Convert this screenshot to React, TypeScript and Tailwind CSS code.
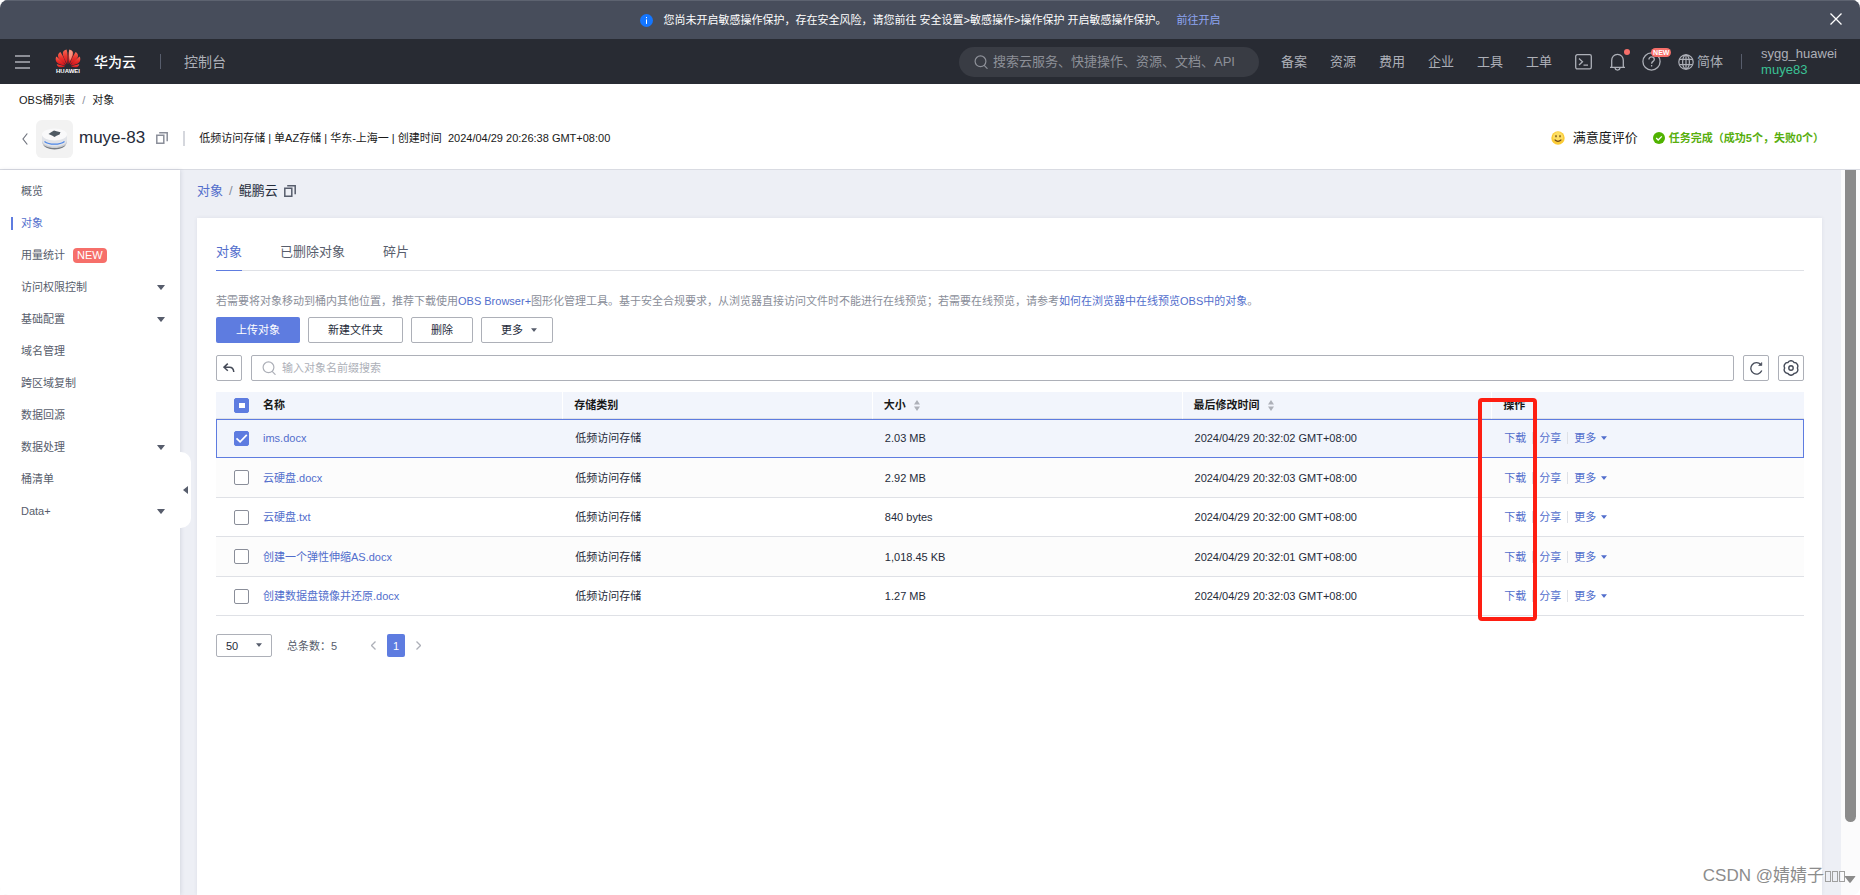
import { useState } from 'react';
import type { ReactNode } from 'react';

interface ObjectRow {
  name: string;
  storage: string;
  size: string;
  modified: string;
}

interface MenuEntry {
  label: string;
  isNew?: boolean;
  expandable?: boolean;
}

const MENU: MenuEntry[] = [
  { label: '概览' },
  { label: '对象' },
  { label: '用量统计', isNew: true },
  { label: '访问权限控制', expandable: true },
  { label: '基础配置', expandable: true },
  { label: '域名管理' },
  { label: '跨区域复制' },
  { label: '数据回源' },
  { label: '数据处理', expandable: true },
  { label: '桶清单' },
  { label: 'Data+', expandable: true },
];

const ROWS: ObjectRow[] = [
  { name: 'ims.docx', storage: '低频访问存储', size: '2.03 MB', modified: '2024/04/29 20:32:02 GMT+08:00' },
  { name: '云硬盘.docx', storage: '低频访问存储', size: '2.92 MB', modified: '2024/04/29 20:32:03 GMT+08:00' },
  { name: '云硬盘.txt', storage: '低频访问存储', size: '840 bytes', modified: '2024/04/29 20:32:00 GMT+08:00' },
  { name: '创建一个弹性伸缩AS.docx', storage: '低频访问存储', size: '1,018.45 KB', modified: '2024/04/29 20:32:01 GMT+08:00' },
  { name: '创建数据盘镜像并还原.docx', storage: '低频访问存储', size: '1.27 MB', modified: '2024/04/29 20:32:03 GMT+08:00' },
];

const NAV = ['备案', '资源', '费用', '企业', '工具', '工单'];
const TABS = ['对象', '已删除对象', '碎片'];

function Caret({ className = '' }: { className?: string }) {
  return (
    <svg className={`shrink-0 ${className}`} viewBox="0 0 8 5" fill="currentColor">
      <path d="M0.6 0h6.8q.8 0 .3.6L4.5 4.6q-.5.6-1 0L.3.6Q-.2 0 .6 0z" />
    </svg>
  );
}

function CopyIcon({ className = '' }: { className?: string }) {
  return (
    <svg className={`w-3 h-3 shrink-0 ${className}`} viewBox="0 0 12 12" fill="none" stroke="currentColor" strokeWidth={1.5}>
      <path d="M0.8 3.3h7v7.9h-7z" />
      <path d="M3.2 0.8h8v8.4" />
    </svg>
  );
}

function SearchIcon({ className = '' }: { className?: string }) {
  return (
    <svg className={`shrink-0 ${className}`} viewBox="0 0 14 14" fill="none" stroke="currentColor" strokeWidth={1.2}>
      <circle cx="6.5" cy="6.3" r="5.4" />
      <path d="M10.2 10.4l2.9 3" strokeLinecap="round" />
    </svg>
  );
}

function SortIcon() {
  return (
    <svg className="w-[6px] h-[11px] ml-2" viewBox="0 0 6 11" fill="#adb0b8">
      <path d="M3 0l3 4.5H0zM3 11L0 6.5h6z" />
    </svg>
  );
}

function HuaweiLogo() {
  const petals = [
    'M11.9 17.6C9.6 13 7.2 8.4 7.4 4.6 7.5 2.4 9.2 1 11.2.6c1.200 4 1.300 11 .7 17z',
    'M10.9 18.200C7 15.400 2.800 11.600 2.600 8c-.1-1.800.8-3.600 2.400-4.600 2.200 4 4.900 9.800 5.900 14.800z',
    'M10.2 19C6.200 18.800 2 17.400.8 14.600 0 12.600.1 10.400 1 8.800c2.800 2.800 7 6.600 9.200 10.200z',
    'M9.800 19.700C7.800 21.200 5.600 21.600 4 21 2.400 20.400 1.600 19.200 1.400 17.600c2.400 1 6 1.700 8.400 2.100z',
  ];
  return (
    <div className="flex flex-col items-center w-[26px]">
      <svg className="w-[26px] h-[19px]" viewBox="0 0 26 22" preserveAspectRatio="none">
        <defs>
          <linearGradient id="petal" x1="0" y1="0" x2="0" y2="1">
            <stop offset="0" stopColor="#f56a55" />
            <stop offset="0.5" stopColor="#ea2f2a" />
            <stop offset="1" stopColor="#d0121c" />
          </linearGradient>
        </defs>
        <g fill="url(#petal)">
          {petals.map((d) => (
            <path key={d} d={d} transform="translate(0.4 0)" />
          ))}
          {petals.map((d) => (
            <path key={d} d={d} transform="matrix(-1 0 0 1 25.6 0)" />
          ))}
        </g>
        <path d="M14.2 1c2 .4 3.300 1.500 3.400 3.600.1 2.400-1.200 6-2.800 9.400-.9-4-1-9-.6-13z" fill="#fbb6a0" opacity="0.7" />
      </svg>
      <span className="text-[6px] leading-[7px] font-bold text-white">HUAWEI</span>
    </div>
  );
}

function BucketIcon() {
  return (
    <div className="flex items-center justify-center w-[37px] h-[38px] rounded-md bg-[#f2f2f2] shrink-0">
      <svg className="w-[27px] h-[24px]" viewBox="0 0 27 24">
        <ellipse cx="13.5" cy="16.5" rx="11.5" ry="6" fill="#777c83" />
        <path d="M1 8v7c0 3.600 5.600 6 12.500 6S26 18.600 26 15V8z" fill="#c9ccd1" />
        <path d="M1 8v5.500c0 3.600 5.600 6 12.500 6s12.500-2.400 12.500-6V8z" fill="#e1e3e8" />
        <path d="M3.500 14.500c2.400 1.800 6 2.700 10 2.700s7.600-.9 10-2.700" fill="none" stroke="#4b86e8" strokeWidth="1.2" />
        <ellipse cx="13.5" cy="7.500" rx="12.500" ry="6" fill="#f9f9fa" />
        <path d="M7.500 7l3-2L13 3.500l2.500.8 4 1-1 2.200-3 1.300-2 1.200-2.500-1.400z" fill="#505b64" />
      </svg>
    </div>
  );
}

function IconButton({ label, children }: { label: string; children: ReactNode }) {
  return (
    <button
      aria-label={label}
      className="flex items-center justify-center w-[26px] h-[26px] shrink-0 border border-[#adb0b8] rounded-xs bg-white text-[#464c59]"
    >
      {children}
    </button>
  );
}

function ToolButton({ children }: { children: ReactNode }) {
  return (
    <button className="flex items-center h-[26px] px-[19px] border border-[#adb0b8] rounded-xs bg-white text-[#252b3a]">
      {children}
    </button>
  );
}

function NoticeBar({ onClose }: { onClose: () => void }) {
  return (
    <div className="relative flex items-center justify-center h-[39px] shrink-0 bg-[#474d5b] border-t border-[#5d6370] text-white">
      <svg className="w-[13px] h-[13px] mr-[11px]" viewBox="0 0 13 13">
        <circle cx="6.5" cy="6.5" r="6.5" fill="#1476ff" />
        <path d="M6.5 5.4v4.500M6.500 3v1.200" stroke="#fff" strokeWidth="1" />
      </svg>
      <span>您尚未开启敏感操作保护，存在安全风险，请您前往 安全设置&gt;敏感操作&gt;操作保护 开启敏感操作保护。</span>
      <a href="#" className="ml-[10px] text-[#8ea5f2]">
        前往开启
      </a>
      <button aria-label="关闭" onClick={onClose} className="absolute right-[18px] top-3">
        <svg className="w-3 h-3" viewBox="0 0 12 12" stroke="#fff" strokeWidth={1.3}>
          <path d="M0.5 0.5l11 11M11.5 0.5l-11 11" />
        </svg>
      </button>
    </div>
  );
}

function TopBar() {
  return (
    <header className="flex items-center h-[45px] shrink-0 pl-[15px] pr-[23px] bg-[#282b33] text-[#adb0b8] text-[13px]">
      <button aria-label="菜单">
        <svg className="w-[15px] h-[14px]" viewBox="0 0 15 14" stroke="currentColor" strokeWidth={1.4}>
          <path d="M0 1h15M0 7h15M0 13h15" />
        </svg>
      </button>
      <div className="ml-[25px]">
        <HuaweiLogo />
      </div>
      <span className="ml-[13px] text-sm font-medium text-white">华为云</span>
      <span className="w-px h-[15px] ml-6 bg-[#575d6c]" />
      <span className="ml-[23px] text-sm">控制台</span>

      <label className="flex items-center w-[300px] h-[30px] ml-auto pl-[15px] rounded-full bg-[#393c44] text-[#8d9098]">
        <SearchIcon className="w-[14px] h-[14px]" />
        <input
          aria-label="搜索"
          placeholder="搜索云服务、快捷操作、资源、文档、API"
          className="flex-1 min-w-0 ml-[5px] bg-transparent outline-none placeholder:text-[#8d9098]"
        />
      </label>
      <nav className="flex gap-[23px] ml-[22px]">
        {NAV.map((item) => (
          <a key={item} href="#">
            {item}
          </a>
        ))}
      </nav>
      <button aria-label="CloudShell" className="ml-[23px]">
        <svg className="w-[17px] h-[16px]" viewBox="0 0 17 16" fill="none" stroke="currentColor" strokeWidth={1.3}>
          <rect x="0.7" y="0.7" width="15.6" height="14.2" rx="1.6" />
          <path d="M4 4.5l3.500 3.300L4 11M8.500 11.200H13" />
        </svg>
      </button>
      <button aria-label="消息" className="relative ml-[17px]">
        <svg className="w-[17px] h-[18px]" viewBox="0 0 17 18" fill="none" stroke="currentColor" strokeWidth={1.3}>
          <path d="M1 14.300h15M2.700 14V7.500C2.700 4 5 1.300 8.500 1.300S14.300 4 14.300 7.500V14" />
          <path d="M6 15c.3 1.500 1.200 2.200 2.500 2.200S10.700 16.500 11 15" />
        </svg>
        <span className="absolute -right-1 -top-1 w-[6px] h-[6px] rounded-full bg-[#f66f6a]" />
      </button>
      <button aria-label="帮助" className="relative ml-[16px]">
        <svg className="w-[19px] h-[19px]" viewBox="0 0 19 19" fill="none" stroke="currentColor" strokeWidth={1.3}>
          <circle cx="9.5" cy="9.5" r="8.6" />
          <path d="M6.900 7.600c0-1.700 1.100-2.700 2.700-2.700s2.700 1 2.700 2.500c0 2-2.700 2-2.700 4.300M9.600 13v1.600" />
        </svg>
        <span className="absolute left-[9px] -top-1 px-[2px] rounded-full bg-[#f66f6a] text-white text-[7px] leading-[9px] font-bold">
          NEW
        </span>
      </button>
      <button className="flex items-center ml-[17px]">
        <svg className="w-4 h-4 mr-[3px]" viewBox="0 0 16 16" fill="none" stroke="currentColor" strokeWidth={1.2}>
          <circle cx="8" cy="8" r="7.2" />
          <ellipse cx="8" cy="8" rx="3.4" ry="7.2" />
          <path d="M8 0.8v14.400M1.500 5.300h13M1.500 10.700h13" />
        </svg>
        简体
      </button>
      <span className="w-px h-[15px] ml-[18px] bg-[#575d6c]" />
      <div className="ml-[19px] leading-4">
        <div>sygg_huawei</div>
        <div className="text-[#3ac295]">muye83</div>
      </div>
    </header>
  );
}

function BucketHeader() {
  return (
    <section className="h-[86px] shrink-0 border-b border-[#d9dbe2] bg-white text-[#191919]">
      <div className="flex gap-[7px] pl-[19px] pt-2 leading-4">
        <a href="#">OBS桶列表</a>
        <span className="text-[#8a8e99]">/</span>
        <span>对象</span>
      </div>
      <div className="flex items-center h-[38px] mt-3 pl-[22px] pr-9">
        <button aria-label="返回" className="text-[#71757f]">
          <svg className="w-[6px] h-3" viewBox="0 0 6 12" fill="none" stroke="currentColor" strokeWidth={1.2}>
            <path d="M5.3 0.5L1 6l4.300 5.500" />
          </svg>
        </button>
        <div className="ml-2">
          <BucketIcon />
        </div>
        <div className="flex flex-1 items-center ml-[6px] pb-[2px]">
          <h1 className="text-[17px] text-[#252b3a]">muye-83</h1>
          <CopyIcon className="ml-[11px] text-[#8a8e99]" />
          <span className="w-[2px] h-[15px] ml-[15px] bg-[#d5d7dd]" />
          <span className="ml-[14px] whitespace-pre">
            低频访问存储 | 单AZ存储 | 华东-上海一 | 创建时间{'  '}2024/04/29 20:26:38 GMT+08:00
          </span>

          <svg className="w-[14px] h-[14px] ml-auto" viewBox="0 0 14 14">
            <circle cx="7" cy="7" r="6.7" fill="#fbcb35" />
            <circle cx="7" cy="6" r="5" fill="#fdde62" />
            <path d="M3.6 8.600q3.400 3.400 6.800 0" fill="none" stroke="#6b4412" strokeWidth="1.2" />
            <path d="M5 4.300v2M9 4.300v2" stroke="#6b4412" strokeWidth="1.3" />
          </svg>
          <a href="#" className="ml-2 text-[13px]">
            满意度评价
          </a>
          <svg className="w-3 h-3 ml-[15px]" viewBox="0 0 12 12">
            <circle cx="6" cy="6" r="6" fill="#50b300" />
            <path d="M3.2 6l2 2 3.600-3.600" stroke="#fff" strokeWidth="1.3" fill="none" />
          </svg>
          <span className="ml-1 font-bold text-[#57ae0d]">任务完成（成功5个，失败0个）</span>
        </div>
      </div>
    </section>
  );
}

function Sidebar({ active, onSelect }: { active: string; onSelect: (label: string) => void }) {
  return (
    <aside className="relative z-10 w-[180px] shrink-0 pt-[5px] bg-white shadow-[1px_0_4px_rgba(40,50,80,0.12)]">
      <ul>
        {MENU.map((entry) => (
          <li key={entry.label}>
            <button
              onClick={() => onSelect(entry.label)}
              className={`flex items-center w-full h-8 pl-[11px] pr-[15px] text-left ${
                entry.label === active ? 'text-[#526ecc]' : 'text-[#575d6c]'
              }`}
            >
              <span className={`w-[2px] h-[13px] mr-2 ${entry.label === active ? 'bg-[#5e7ce0]' : ''}`} />
              {entry.label}
              {entry.isNew && (
                <span className="ml-2 px-1 rounded-sm bg-[#f66f6a] text-white leading-[15px]">NEW</span>
              )}
              {entry.expandable && <Caret className="w-2 h-[5px] ml-auto text-[#575d6c]" />}
            </button>
          </li>
        ))}
      </ul>
      <button
        aria-label="收起"
        className="absolute left-full top-[282px] flex items-center justify-center w-[11px] h-[76px] rounded-r-[10px] bg-white text-[#575d6c]"
      >
        <svg className="w-[5px] h-2" viewBox="0 0 5 8" fill="currentColor">
          <path d="M5 0v8L0 4z" />
        </svg>
      </button>
    </aside>
  );
}

interface RowCheckboxProps {
  label: string;
  checked: boolean;
  mixed?: boolean;
  onChange: () => void;
}

function RowCheckbox({ label, checked, mixed, onChange }: RowCheckboxProps) {
  return (
    <span className="relative block w-[15px] h-[15px]">
      <input
        type="checkbox"
        aria-label={label}
        checked={checked}
        onChange={onChange}
        className="block appearance-none w-[15px] h-[15px] rounded-xs border border-[#8a8e99] bg-white checked:border-[#5e7ce0] checked:bg-[#5e7ce0]"
      />
      {checked && (
        <svg className="absolute inset-0 w-[15px] h-[15px] pointer-events-none" viewBox="0 0 15 15" fill="none">
          {mixed ? (
            <path d="M5 5h6v5H5z" fill="#fff" />
          ) : (
            <path d="M2.5 7.3l3.600 3.600 6.700-7" stroke="#fff" strokeWidth="1.7" />
          )}
        </svg>
      )}
    </span>
  );
}

function ObjectTable() {
  const [selected, setSelected] = useState<string[]>(['ims.docx']);

  const toggle = (name: string) => {
    setSelected((prev) => (prev.includes(name) ? prev.filter((n) => n !== name) : [...prev, name]));
  };

  const toggleAll = () => {
    setSelected(selected.length > 0 ? [] : ROWS.map((r) => r.name));
  };

  return (
    <div className="relative mt-[11px]">
      <table className="w-full table-fixed border-separate border-spacing-0 text-left text-[#252b3a]">
        <colgroup>
          <col className="w-[47px]" />
          <col />
          <col className="w-[19.5%]" />
          <col className="w-[19.5%]" />
          <col className="w-[19.5%]" />
          <col className="w-[19.7%]" />
        </colgroup>
        <thead>
          <tr className="h-[27px] bg-[#f2f5fc] text-[#191919] [&>th]:border-b [&>th]:border-b-[#dfe1e6]">
            <th className="pl-[18px]">
              <RowCheckbox
                label="全选"
                checked={selected.length > 0}
                mixed={selected.length < ROWS.length}
                onChange={toggleAll}
              />
            </th>
            <th>名称</th>
            <th className="pl-[11px] border-l border-l-white">存储类别</th>
            <th className="pl-[11px] border-l border-l-white">
              <span className="flex items-center">
                大小
                <SortIcon />
              </span>
            </th>
            <th className="pl-[11px] border-l border-l-white">
              <span className="flex items-center">
                最后修改时间
                <SortIcon />
              </span>
            </th>
            <th className="pl-[11px] border-l border-l-white">操作</th>
          </tr>
        </thead>
        <tbody>
          {ROWS.map((row) => {
            const isSelected = selected.includes(row.name);
            return (
              <tr
                key={row.name}
                className={`h-[39px] even:h-10 [&>td]:border-b [&>td]:border-[#dfe1e6] ${
                  isSelected ? 'bg-[#f2f5fc] outline -outline-offset-1 outline-[#5e7ce0]' : 'even:bg-[#fcfcfc]'
                }`}
              >
                <td className="pl-[18px]">
                  <RowCheckbox label={row.name} checked={isSelected} onChange={() => toggle(row.name)} />
                </td>
                <td>
                  <a href="#" className="text-[#526ecc]">
                    {row.name}
                  </a>
                </td>
                <td className="pl-[13px]">{row.storage}</td>
                <td className="pl-[13px]">{row.size}</td>
                <td className="pl-[13px]">{row.modified}</td>
                <td className="pl-[13px] text-[#526ecc]">
                  <div className="flex items-center">
                    <a href="#">下载</a>
                    <span className="w-px h-3 mx-[6px] bg-[#dfe1e6]" />
                    <a href="#">分享</a>
                    <span className="w-px h-3 mx-[6px] bg-[#dfe1e6]" />
                    <button className="flex items-center">
                      更多
                      <Caret className="w-[6px] h-1 ml-[5px]" />
                    </button>
                  </div>
                </td>
              </tr>
            );
          })}
        </tbody>
      </table>

      {/* download column highlight */}
      <div className="absolute top-[6px] -bottom-[5px] right-[267px] w-[59px] border-4 border-[#fe1e12] rounded-sm pointer-events-none" />
    </div>
  );
}

function Pagination() {
  return (
    <div className="flex items-center mt-[18px] h-[23px] text-[#575d6c]">
      <span className="relative">
        <select
          aria-label="每页条数"
          defaultValue="50"
          className="appearance-none block w-14 h-[23px] pl-[9px] border border-[#adb0b8] rounded-xs bg-white text-[#252b3a]"
        >
          <option>10</option>
          <option>50</option>
        </select>
        <Caret className="absolute right-[10px] top-[9px] w-[6px] h-1 pointer-events-none" />
      </span>
      <span className="ml-[15px]">总条数：5</span>
      <button aria-label="上一页" className="ml-[34px] text-[#adb0b8]">
        <svg className="w-[5px] h-[9px]" viewBox="0 0 5 9" fill="none" stroke="currentColor" strokeWidth={1.3}>
          <path d="M4.5 0.5l-4 4 4 4" />
        </svg>
      </button>
      <button className="w-[18px] h-[23px] mx-[11px] rounded-xs bg-[#5e7ce0] text-white">1</button>
      <button aria-label="下一页" className="text-[#adb0b8]">
        <svg className="w-[5px] h-[9px]" viewBox="0 0 5 9" fill="none" stroke="currentColor" strokeWidth={1.3}>
          <path d="M0.5 0.5l4 4-4 4" />
        </svg>
      </button>
    </div>
  );
}

export default function App() {
  const [showNotice, setShowNotice] = useState(true);
  const [menu, setMenu] = useState('对象');
  const [tab, setTab] = useState('对象');

  return (
    <div className="relative flex flex-col h-screen overflow-hidden rounded-lg bg-white text-[11px] leading-4 font-['Liberation_Sans','Noto_Sans_CJK_SC',sans-serif]">
      {showNotice && <NoticeBar onClose={() => setShowNotice(false)} />}
      <TopBar />
      <BucketHeader />

      <div className="flex flex-1 min-h-0">
        <Sidebar active={menu} onSelect={setMenu} />

        <main className="flex flex-col flex-1 min-w-0 pl-[17px] pr-[19px] bg-[#edeff5]">
          <div className="flex items-center h-[48px] pb-[7px] shrink-0 text-[13px]">
            <a href="#" className="text-[#526ecc]">
              对象
            </a>
            <span className="mx-[6px] text-[#8a8e99]">/</span>
            <span className="text-[#252b3a]">鲲鹏云</span>
            <CopyIcon className="ml-[6px] text-[#575d6c]" />
          </div>

          <div className="flex-1 pl-[19px] pr-[18px] bg-white shadow-[0_0_4px_rgba(40,50,80,0.08)]">
            <div role="tablist" className="flex gap-[38px] h-[53px] border-b border-[#dfe1e6] text-[13px]">
              {TABS.map((item) => (
                <button
                  key={item}
                  role="tab"
                  aria-selected={item === tab}
                  onClick={() => setTab(item)}
                  className={`h-[53px] pt-[15px] border-b ${
                    item === tab ? 'border-[#5e7ce0] text-[#526ecc]' : 'border-transparent text-[#575d6c]'
                  }`}
                >
                  {item}
                </button>
              ))}
            </div>

            <p className="mt-[22px] text-[#8a8e99]">
              若需要将对象移动到桶内其他位置，推荐下载使用
              <a href="#" className="text-[#526ecc]">
                OBS Browser+
              </a>
              图形化管理工具。基于安全合规要求，从浏览器直接访问文件时不能进行在线预览；若需要在线预览，请参考
              <a href="#" className="text-[#526ecc]">
                如何在浏览器中在线预览OBS中的对象
              </a>
              。
            </p>

            <div className="flex gap-2 mt-2">
              <button className="h-[26px] px-5 rounded-xs bg-[#5e7ce0] text-white">上传对象</button>
              <ToolButton>新建文件夹</ToolButton>
              <ToolButton>删除</ToolButton>
              <ToolButton>
                更多
                <Caret className="w-[6px] h-1 ml-2 -mr-1 text-[#575d6c]" />
              </ToolButton>
            </div>

            <div className="flex gap-[9px] mt-3">
              <IconButton label="返回上级">
                <svg className="w-[12px] h-[10px]" viewBox="0 0 12 10" fill="none" stroke="currentColor" strokeWidth={1.5}>
                  <path d="M4.8 0.6L1 4.200l3.800 3.600M1 4.200h5.500c2.500 0 4 1.800 4.300 4.800" />
                </svg>
              </IconButton>
              <label className="flex flex-1 items-center h-[26px] pl-[10px] border border-[#adb0b8] rounded-xs text-[#adb0b8]">
                <SearchIcon className="w-[14px] h-[14px]" />
                <input
                  aria-label="搜索对象"
                  placeholder="输入对象名前缀搜索"
                  className="flex-1 min-w-0 ml-[6px] bg-transparent outline-none placeholder:text-[#adb0b8]"
                />
              </label>
              <IconButton label="刷新">
                <svg className="w-[13px] h-[13px]" viewBox="0 0 13 13" fill="none" stroke="currentColor" strokeWidth={1.3}>
                  <path d="M11.8 8.600A5.700 5.700 0 1 1 10.800 2.600" />
                  <path d="M8.600 3.500h3.200V0.500z" fill="currentColor" strokeWidth={0.6} />
                </svg>
              </IconButton>
              <IconButton label="设置">
                <svg className="w-[16px] h-[16px]" viewBox="0 0 16 16" fill="none" stroke="currentColor" strokeWidth={1.4}>
                  <path d="M14.3 8A3.600 3.600 0 0 1 11.150 13.460A3.600 3.600 0 0 1 4.850 13.460A3.600 3.600 0 0 1 1.700 8A3.600 3.600 0 0 1 4.850 2.540A3.600 3.600 0 0 1 11.150 2.540A3.600 3.600 0 0 1 14.300 8z" />
                  <circle cx="8" cy="8" r="2.2" />
                </svg>
              </IconButton>
            </div>

            <ObjectTable />
            <Pagination />
          </div>
        </main>

        {/* page scrollbar */}
        <div className="flex flex-col items-center w-[19px] shrink-0 pr-px pb-3 bg-[#fbfbfc] text-[#8b8b8b]">
          <div className="flex-1 w-[11px] rounded-b-full bg-[#8b8b8b]" />
          <Caret className="w-3 h-[7px] mt-[54px]" />
        </div>
      </div>

      <div className="absolute right-[15px] bottom-[7px] flex items-center text-[17px] leading-6 text-[#8c8c8c] [text-shadow:1px_1px_0_#fff]">
        CSDN @婧婧子
        <span className="flex gap-px ml-px">
          <i className="w-[6px] h-[11px] border border-[#a0a0a0]" />
          <i className="w-[6px] h-[11px] border border-[#a0a0a0]" />
          <i className="w-[6px] h-[11px] border border-[#a0a0a0]" />
        </span>
      </div>
    </div>
  );
}
